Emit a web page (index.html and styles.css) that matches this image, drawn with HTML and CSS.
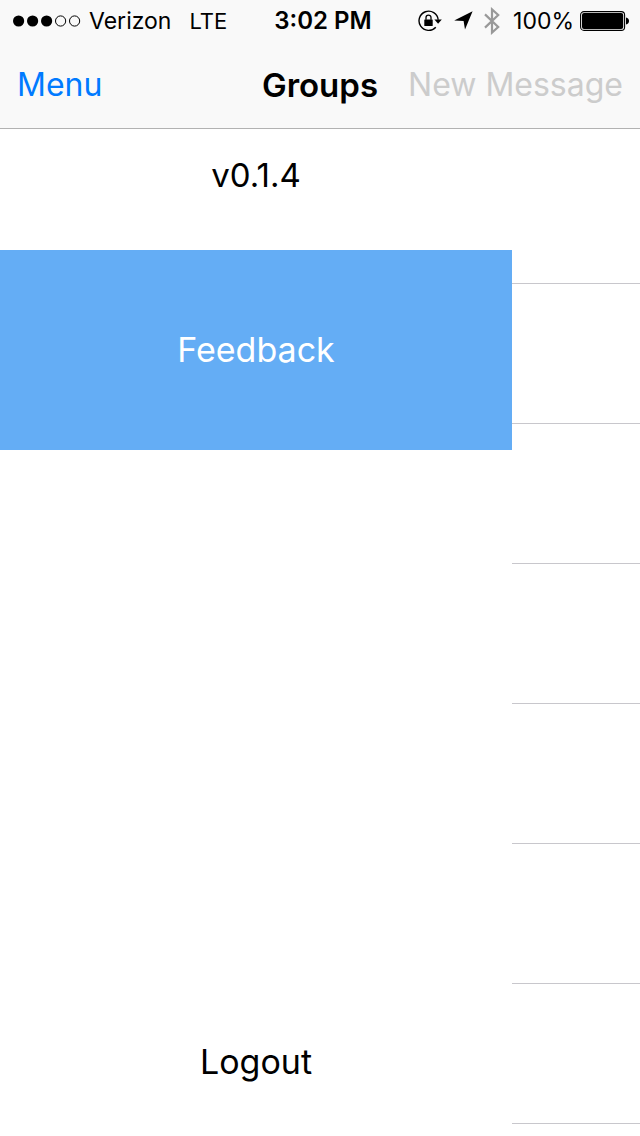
FILE: index.html
```html
<!DOCTYPE html>
<html lang="en">
<head>
<meta charset="utf-8">
<meta name="viewport" content="width=device-width, initial-scale=1">
<title>Groups</title>
<link rel="stylesheet" href="styles.css">
</head>
<body>
<header class="top">
  <div class="status">
    <div class="status-left">
      <svg class="signal" width="68" height="12" viewBox="0 0 68 12" aria-hidden="true">
        <circle cx="5.6" cy="6" r="5.6"/><circle cx="19.6" cy="6" r="5.6"/><circle cx="33.6" cy="6" r="5.6"/>
        <circle class="ring" cx="47.6" cy="6" r="5.1"/><circle class="ring" cx="61.6" cy="6" r="5.1"/>
      </svg>
      <span class="carrier">Verizon</span>
      <span class="network">LTE</span>
    </div>
    <time class="clock">3:02 PM</time>
    <div class="status-right">
      <svg width="24" height="22" viewBox="0 0 24 22" aria-hidden="true">
        <path d="M17.8 17.2A9.6 9.6 0 1 1 20.2 9.8" fill="none" stroke="#000" stroke-width="1.4"/>
        <path d="M16.4 9.5H23.8L20.1 13.7Z"/>
        <rect x="6.3" y="9.4" width="8.4" height="6.6" rx=".5"/>
        <path d="M8 9.8V7.6a2.5 2.5 0 0 1 5 0v2.2" fill="none" stroke="#000" stroke-width="1.3"/>
      </svg>
      <svg class="location" width="19" height="19" viewBox="0 0 19 19" aria-hidden="true">
        <path d="M18.6 .2 11 18.4 9.6 10 .2 9.4Z"/>
      </svg>
      <svg class="bluetooth" width="16" height="28" viewBox="0 0 16 28" aria-hidden="true">
        <path d="M1 7.4 14.2 20 8 25.6V2.4L14.2 8 1 20.6" fill="none" stroke="#999" stroke-width="2.2"/>
      </svg>
      <span class="percent">100%</span>
      <svg class="battery" width="49" height="20" viewBox="0 0 49 20" aria-hidden="true">
        <rect x=".6" y=".6" width="44" height="18.8" rx="3.4" fill="none" stroke="#000" stroke-width="1.1"/>
        <rect x="2" y="2" width="41.2" height="16" rx="2"/>
        <path d="M46 6.6c4 .6 4 6.2 0 6.8Z"/>
      </svg>
    </div>
  </div>
  <nav class="bar">
    <button class="bar-button" type="button">Menu</button>
    <h1 class="title">Groups</h1>
    <button class="bar-button compose" type="button" disabled>New Message</button>
  </nav>
</header>
<main class="content">
  <aside class="drawer">
    <p class="version">v0.1.4</p>
    <button class="feedback" type="button">Feedback</button>
    <button class="logout" type="button">Logout</button>
  </aside>
  <ul class="rows">
    <li class="row first"></li>
    <li class="row"></li>
    <li class="row"></li>
    <li class="row"></li>
    <li class="row"></li>
    <li class="row"></li>
    <li class="row"></li>
  </ul>
</main>
</body>
</html>
```
FILE: styles.css
```css
* {
  box-sizing: border-box;
}

body {
  margin: 0;
  min-height: 100vh;
  display: flex;
  flex-direction: column;
  background: #fff;
  color: #000;
  font-family: Inter, "Liberation Sans", sans-serif;
  font-size: 33px;
  line-height: 40px;
}

button {
  margin: 0;
  padding: 0;
  border: 0;
  background: none;
  color: inherit;
  font: inherit;
}

svg {
  display: block;
  flex: none;
}

.top {
  background: #f9f9f9;
  border-bottom: 1px solid #b2b2b2;
}

.status {
  display: grid;
  grid-template-columns: 1fr auto 1fr;
  align-items: center;
  height: 41px;
  padding: 0 7px 0 13px;
  font-size: 23px;
  line-height: 28px;
  white-space: nowrap;
}

.status-left,
.status-right {
  display: flex;
  align-items: center;
  min-width: 0;
}

.status-right {
  justify-content: flex-end;
}

.ring {
  fill: none;
  stroke: #000;
  stroke-width: 1;
}

.carrier {
  margin-left: 8px;
}

.network {
  margin-left: 18px;
  font-size: 22px;
}

.clock {
  font-size: 24px;
  font-weight: 600;
}

.location {
  margin-left: 12px;
}

.bluetooth {
  margin-left: 11px;
}

.percent {
  margin-left: 13px;
}

.battery {
  margin: 0 4px 0 6px;
}

.bar {
  display: grid;
  grid-template-columns: 1fr auto 1fr;
  align-items: center;
  height: 87px;
  padding: 0 17px;
  white-space: nowrap;
}

.bar-button {
  justify-self: start;
  color: #007aff;
  font-size: 32px;
}

.title {
  margin: 0;
  font-size: 33px;
  font-weight: 600;
}

.compose {
  justify-self: end;
  color: #ccc;
}

.content {
  flex: 1;
  display: grid;
  grid-template-columns: 4fr 1fr;
}

.drawer {
  display: flex;
  flex-direction: column;
  align-items: center;
}

.version {
  margin: 26px 0 55px;
}

.feedback {
  align-self: stretch;
  height: 200px;
  background: #64adf5;
  color: #fff;
  font-size: 34px;
}

.logout {
  margin: auto 0 54px;
  font-size: 34px;
}

.rows {
  margin: 0;
  padding: 0;
  list-style: none;
}

.row {
  height: 140px;
  border-bottom: 1px solid #c8c7cc;
}

.first {
  height: 155px;
}
```
